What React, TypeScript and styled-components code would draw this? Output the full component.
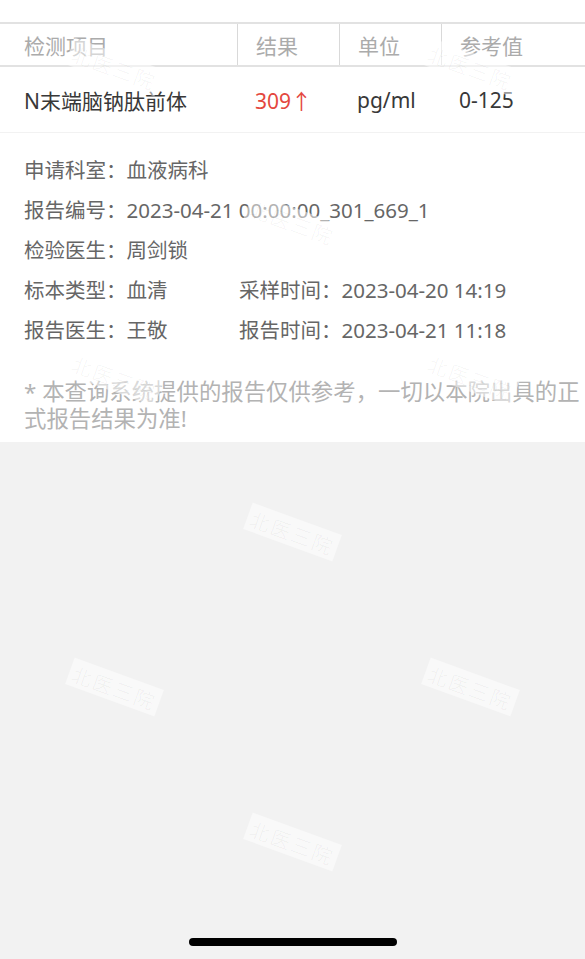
import React from 'react';
import styled, { createGlobalStyle } from 'styled-components';

const GlobalStyle = createGlobalStyle`
  html, body {
    margin : 0;
    padding : 0;
    background : #f2f2f2;
  }
  body {
    font-family : "Noto Sans", "Noto Sans CJK SC", sans-serif;
    -webkit-font-smoothing : antialiased;
  }
`

const FONT = `"Noto Sans", "Noto Sans CJK SC", sans-serif`;
const COLS = '237px 102px 102px 1fr';

const Page = styled.div`
  position : relative;
  min-height : 100vh;
  display : flex;
  flex-direction : column;
  overflow : hidden;
`

const Card = styled.div`
  background : #fff;
  padding-top : 22px;
`

const HeadRow = styled.div`
  display : grid;
  grid-template-columns : ${COLS};
  height : 41px;
  border-top : 2px solid #e2e2e2;
  border-bottom : 2px solid #e2e2e2;
`

const HeadCell = styled.div<{ first?: boolean }>`
  display : flex;
  align-items : center;
  padding-left : ${(p) => (p.first ? '24px' : '18px')};
  border-left : ${(p) => (p.first ? 'none' : '1px solid #d9d9d9')};
  font-family : ${FONT};
  font-size : 21px;
  color : #ababab;
`

const DataRow = styled.div`
  display : grid;
  grid-template-columns : ${COLS};
  height : 65px;
  border-bottom : 1px solid #f2f2f2;
`

const DataCell = styled.div<{ first?: boolean; alert?: boolean }>`
  display : flex;
  align-items : center;
  padding-left : ${(p) => (p.first ? '24px' : '18px')};
  font-family : ${FONT};
  font-size : 21px;
  color : ${(p) => (p.alert ? '#e4483e' : '#383838')};
`

const InfoWrap = styled.div`
  padding : 17px 0 10px 24px;
`

const InfoRow = styled.div`
  display : grid;
  grid-template-columns : 215px 1fr;
  line-height : 40px;
  font-family : ${FONT};
  font-size : 20.5px;
  color : #666;
  white-space : nowrap;
`

const Note = styled.div`
  margin-top : 28px;
  font-family : ${FONT};
  font-size : 22.4px;
  line-height : 27px;
  color : #b3b3b3;
`

const Filler = styled.div`
  flex : 1;
  display : flex;
  flex-direction : column;
  justify-content : flex-end;
  align-items : center;
`

const HomeBar = styled.div`
  width : 208px;
  height : 8px;
  border-radius : 4px;
  background : #000;
  margin-bottom : 13px;
`

const MarkLayer = styled.div`
  position : absolute;
  inset : 0;
  pointer-events : none;
`

const Mark = styled.div`
  position : absolute;
  width : 95px;
  height : 28px;
  margin : -14px 0 0 -47px;
  transform : rotate(20deg);
  background : rgba(255, 255, 255, 0.5);
  display : flex;
  align-items : center;
  justify-content : center;
  font-family : "Noto Sans CJK SC", sans-serif;
  font-size : 20px;
  font-weight : 300;
  letter-spacing : 2px;
  color : rgba(0, 0, 0, 0.055);
`

const heads = ['检测项目', '结果', '单位', '参考值'];

const items = [
  { name : 'N末端脑钠肽前体', result : '309↑', unit : 'pg/ml', range : '0-125', alert : true },
];

const info : [string, string?][] = [
  ['申请科室：血液病科'],
  ['报告编号：2023-04-21 00:00:00_301_669_1'],
  ['检验医生：周剑锁'],
  ['标本类型：血清', '采样时间：2023-04-20 14:19'],
  ['报告医生：王敬', '报告时间：2023-04-21 11:18'],
];

// 워터마크 위치 (중심 좌표)
const marks = [
  [114, 67], [470, 67], [292, 222], [114, 377], [470, 377],
  [292, 532], [114, 687], [470, 687], [292, 842],
];

const App = () => {
  return (
    <>
      <GlobalStyle />
      <Page>
        <Card>
          <HeadRow>
            {heads.map((h, i) => <HeadCell first={i === 0} key={h}>{h}</HeadCell>)}
          </HeadRow>
          {items.map((it) => (
            <DataRow key={it.name}>
              <DataCell first>{it.name}</DataCell>
              <DataCell alert={it.alert}>{it.result}</DataCell>
              <DataCell>{it.unit}</DataCell>
              <DataCell>{it.range}</DataCell>
            </DataRow>
          ))}
          <InfoWrap>
            {info.map(([a, b], i) => (
              <InfoRow key={i}>
                <span>{a}</span>
                {b && <span>{b}</span>}
              </InfoRow>
            ))}
            <Note>* 本查询系统提供的报告仅供参考，一切以本院出具的正式报告结果为准!</Note>
          </InfoWrap>
        </Card>
        <Filler>
          <HomeBar />
        </Filler>
        <MarkLayer>
          {marks.map(([x, y], i) => (
            <Mark key={i} style={{ left : x, top : y }}>北医三院</Mark>
          ))}
        </MarkLayer>
      </Page>
    </>
  );
};

export default App;
